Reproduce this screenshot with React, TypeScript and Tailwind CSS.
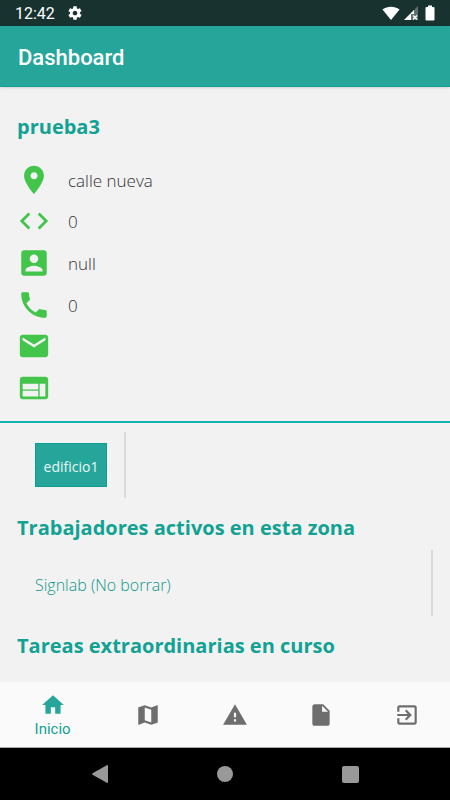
import type { ReactNode } from "react";

type IconProps = { d: string; className: string };

function Icon({ d, className }: IconProps) {
  return (
    <svg viewBox="0 0 24 24" fill="currentColor" aria-hidden="true" className={className}>
      <path d={d} />
    </svg>
  );
}

const icons = {
  settings:
    "M19.43 12.98c.04-.32.07-.64.07-.98s-.03-.66-.07-.98l2.11-1.65c.19-.15.24-.42.12-.64l-2-3.46c-.12-.22-.39-.3-.61-.22l-2.49 1c-.52-.4-1.08-.73-1.69-.98l-.38-2.65C14.46 2.18 14.25 2 14 2h-4c-.25 0-.46.18-.49.42l-.38 2.65c-.61.25-1.17.59-1.69.98l-2.49-1c-.23-.09-.49 0-.61.22l-2 3.46c-.13.22-.07.49.12.64l2.11 1.65c-.04.32-.07.65-.07.98s.03.66.07.98l-2.11 1.65c-.19.15-.24.42-.12.64l2 3.46c.12.22.39.3.61.22l2.49-1c.52.4 1.08.73 1.69.98l.38 2.65c.03.24.24.42.49.42h4c.25 0 .46-.18.49-.42l.38-2.65c.61-.25 1.17-.59 1.69-.98l2.49 1c.23.09.49 0 .61-.22l2-3.46c.12-.22.07-.49-.12-.64l-2.11-1.65zM12 15.5c-1.93 0-3.5-1.57-3.5-3.5s1.57-3.5 3.5-3.5 3.5 1.57 3.5 3.5-1.57 3.5-3.5 3.5z",
  place:
    "M12 2C8.13 2 5 5.13 5 9c0 5.25 7 13 7 13s7-7.75 7-13c0-3.87-3.13-7-7-7zm0 9.5c-1.38 0-2.5-1.12-2.5-2.5s1.12-2.5 2.5-2.5 2.5 1.12 2.5 2.5-1.12 2.5-2.5 2.5z",
  code: "M9.4 16.6L4.8 12l4.6-4.6L8 6l-6 6 6 6 1.4-1.4zm5.2 0l4.6-4.6-4.6-4.6L16 6l6 6-6 6-1.4-1.4z",
  account:
    "M3 5v14c0 1.1.89 2 2 2h14c1.1 0 2-.9 2-2V5c0-1.1-.9-2-2-2H5c-1.11 0-2 .9-2 2zm12 4c0 1.66-1.34 3-3 3s-3-1.34-3-3 1.34-3 3-3 3 1.34 3 3zm-9 8c0-2 4-3.1 6-3.1s6 1.1 6 3.1v1H6v-1z",
  phone:
    "M6.62 10.79c1.44 2.83 3.76 5.14 6.59 6.59l2.2-2.2c.27-.27.67-.36 1.02-.24 1.12.37 2.33.57 3.57.57.55 0 1 .45 1 1V20c0 .55-.45 1-1 1-9.39 0-17-7.61-17-17 0-.55.45-1 1-1h3.5c.55 0 1 .45 1 1 0 1.25.2 2.45.57 3.57.11.35.03.74-.25 1.02l-2.2 2.2z",
  email:
    "M20 4H4c-1.1 0-1.99.9-1.99 2L2 18c0 1.1.9 2 2 2h16c1.1 0 2-.9 2-2V6c0-1.1-.9-2-2-2zm0 4l-8 5-8-5V6l8 5 8-5v2z",
  web: "M20 4H4c-1.1 0-1.99.9-1.99 2L2 18c0 1.1.9 2 2 2h16c1.1 0 2-.9 2-2V6c0-1.1-.9-2-2-2zm-5 14H4v-4h11v4zm0-5H4V9h11v4zm5 5h-4V9h4v9z",
  home: "M10 20v-6h4v6h5v-8h3L12 3 2 12h3v8z",
  map: "M20.5 3l-.16.03L15 5.1 9 3 3.36 4.9c-.21.07-.36.25-.36.48V20.5c0 .28.22.5.5.5l.16-.03L9 18.9l6 2.1 5.64-1.9c.21-.07.36-.25.36-.48V3.5c0-.28-.22-.5-.5-.5zM15 19l-6-2.11V5l6 2.11V19z",
  warning: "M1 21h22L12 2 1 21zm12-3h-2v-2h2v2zm0-4h-2v-4h2v4z",
  file: "M6 2c-1.1 0-1.99.9-1.99 2L4 20c0 1.1.89 2 1.99 2H18c1.1 0 2-.9 2-2V8l-6-6H6zm7 7V3.5L18.5 9H13z",
  exit: "M10.09 15.59L11.5 17l5-5-5-5-1.41 1.41L12.67 11H3v2h9.67l-2.58 2.59zM19 3H5c-1.11 0-2 .9-2 2v4h2V5h14v14H5v-4H3v4c0 1.1.89 2 2 2h14c1.1 0 2-.9 2-2V5c0-1.1-.9-2-2-2z",
};

const details = [
  { icon: icons.place, text: "calle nueva" },
  { icon: icons.code, text: "0" },
  { icon: icons.account, text: "null" },
  { icon: icons.phone, text: "0" },
  { icon: icons.email, text: "" },
  { icon: icons.web, text: "" },
];

const tabs = [
  { label: "Mapa", icon: icons.map },
  { label: "Alertas", icon: icons.warning },
  { label: "Documentos", icon: icons.file },
  { label: "Salir", icon: icons.exit },
];

function Heading({ children }: { children: ReactNode }) {
  return (
    <h2 className="px-[17px] text-xl leading-8 font-bold text-[#11a294]">
      {children}
    </h2>
  );
}

function StatusBar() {
  return (
    <div className="flex h-[26px] items-center justify-between bg-[#18332f] pr-3 pl-[15px] text-white">
      <div className="flex items-center gap-3">
        <span className="pt-0.5 font-[Roboto,sans-serif] text-base">12:42</span>
        <Icon d={icons.settings} className="size-4" />
      </div>
      <div className="flex items-center gap-1">
        <svg viewBox="0 0 18 14" className="h-3.5 w-[18px]" fill="currentColor" aria-hidden="true">
          <path d="M0.5 3.5C5.5 -0.3 12.5 -0.3 17.5 3.5L9 14z" />
        </svg>
        <svg viewBox="0 0 14 14" className="size-3.5" aria-hidden="true">
          <path d="M0 14L14 0V14z" fill="#5d706d" />
          <path d="M0 14L10 4V8H7V14z" fill="#fff" />
          <path d="M9 9.5L13 13.5M13 9.5L9 13.5" stroke="#fff" strokeWidth="1.4" />
        </svg>
        <svg viewBox="0 0 16 16" className="size-4" fill="currentColor" aria-hidden="true">
          <path d="M6 0.5h4v1.5h1.5q1 0 1 1v11.5q0 1-1 1h-7q-1 0-1-1V3q0-1 1-1H6z" />
        </svg>
      </div>
    </div>
  );
}

export default function App() {
  return (
    <div className="flex min-h-screen flex-col bg-[#f2f2f2] font-['Open_Sans','Noto_Sans',sans-serif]">
      <StatusBar />
      <header className="flex h-[61px] items-center border-b border-[#12a094] bg-[#26a69a] px-[18px] pt-1 shadow-sm">
        <h1 className="font-[Roboto,sans-serif] text-[22px] leading-8 font-medium text-white">Dashboard</h1>
      </header>

      <main className="flex grow flex-col">
        <section className="border-b-2 border-[#12b5ad] pt-6 pb-3">
          <Heading>prueba3</Heading>
          <ul className="mt-4 grid h-[250px] grid-rows-6 px-[17px]">
            {details.map((item, index) => (
              <li key={index} className="flex items-center gap-[17px]">
                <Icon d={item.icon} className="size-[34px] shrink-0 text-[#43c54b]" />
                <span className="pt-0.5 text-[17px] leading-6 font-light text-[#333]">{item.text}</span>
              </li>
            ))}
          </ul>
        </section>

        <div className="mt-[9px] flex">
          <div className="flex h-[66px] items-center border-r-2 border-[#dadada] pr-[17px] pl-[35px]">
            <button
              type="button"
              className="h-11 w-[72px] border border-[#0f9d8f] bg-[#26a69a] pt-1 text-sm text-white/90"
            >
              edificio1
            </button>
          </div>
        </div>

        <section className="mt-[14px]">
          <Heading>Trabajadores activos en esta zona</Heading>
          <div className="mt-[6px] mr-[17px] flex h-[66px] items-center border-r-2 border-[#dadada] pl-[35px]">
            <a href="#signlab" className="pt-1 text-base leading-6 font-light text-[#11968a]">
              Signlab (No borrar)
            </a>
          </div>
        </section>

        <section className="mt-[14px]">
          <Heading>Tareas extraordinarias en curso</Heading>
        </section>
      </main>

      <nav className="flex h-[66px] border-b border-[#a8a8a8] bg-[#fafafa] font-[Roboto,sans-serif] text-[#6e6e6e]">
        <a
          href="#inicio"
          aria-current="page"
          className="flex grow-[105] basis-0 flex-col items-center pt-2.5 text-[15px] leading-[22px] text-[#11a294]"
        >
          <Icon d={icons.home} className="size-[26px] text-[#26a69a]" />
          <span>Inicio</span>
        </a>
        {tabs.map((tab) => (
          <a
            key={tab.label}
            href="#tab"
            aria-label={tab.label}
            className="flex grow-[86] basis-0 items-center justify-center"
          >
            <Icon d={tab.icon} className="size-[26px]" />
          </a>
        ))}
      </nav>

      <div className="flex h-[52px] items-center justify-center bg-black text-[#999]">
        <button type="button" aria-label="Back" className="flex w-[125px] justify-center">
          <svg viewBox="0 0 18 20" className="h-5 w-[18px]" fill="currentColor">
            <path d="M17 2V18Q17 19.4 15.8 18.8L1.5 10.8Q.6 10 1.5 9.2L15.8 1.2Q17 .6 17 2z" />
          </svg>
        </button>
        <button type="button" aria-label="Home" className="flex w-[125px] justify-center">
          <span className="size-4 rounded-full bg-[#999]" />
        </button>
        <button type="button" aria-label="Recent apps" className="flex w-[125px] justify-center">
          <span className="size-[17px] rounded-xs bg-[#999]" />
        </button>
      </div>
    </div>
  );
}
